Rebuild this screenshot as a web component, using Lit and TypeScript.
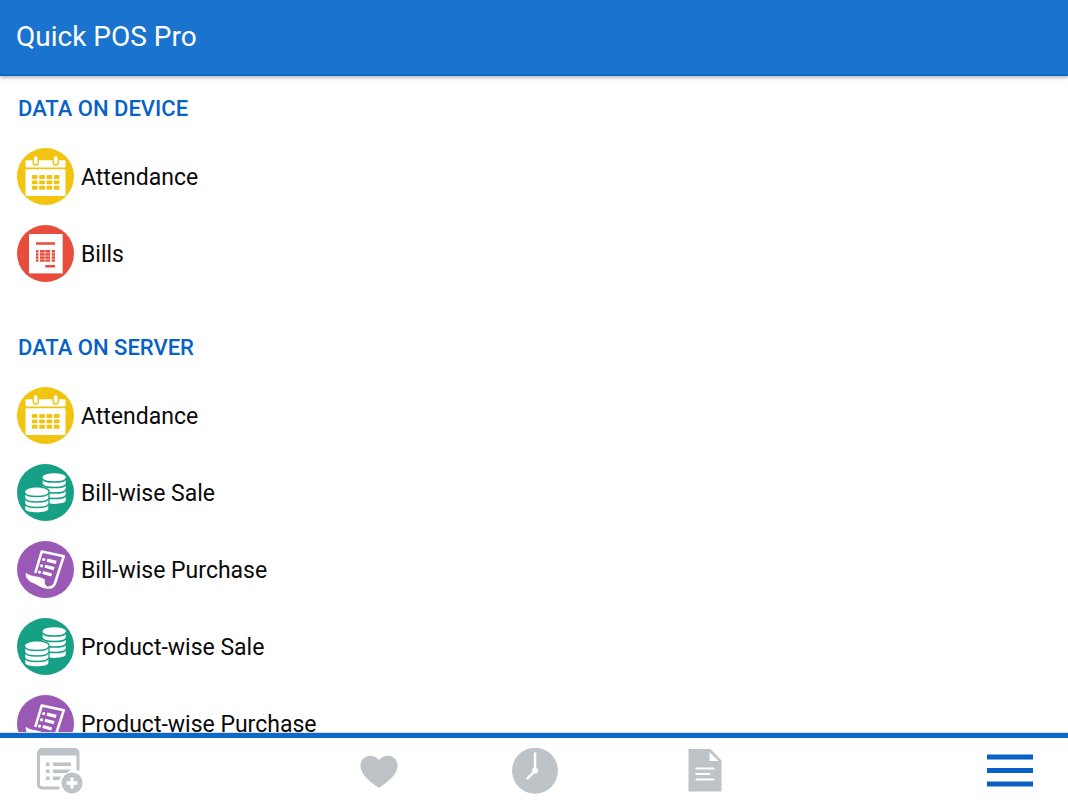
import { LitElement, html, css, svg } from "lit";
import { customElement, property } from "lit/decorators.js";

type IconName = "calendar" | "bill" | "coins" | "receipt";

const calendarCells = [27, 32.4, 37.8].map((y) =>
  [14.8, 22.2, 29.5, 36.8].map(
    (x) => svg`<rect x=${x} y=${y} width="5.7" height="3.9" rx="0.8" fill="#f1c40f"/>`
  )
);

const stack = (x: number, y: number, bottom: number, bands: number[]) => svg`
  <path fill="#fff" d="M${x} ${y}V${bottom}c0 4.4 23 4.4 23 0V${y}z"/>
  <ellipse cx=${x + 11.5} cy=${y} rx="11.5" ry="3.6" fill="#fff"/>
  ${bands.map((b) => svg`
    <path fill="none" stroke="#16a085" stroke-width="1.5"
      d="M${x - 0.4} ${b}c1 4.8 22.8 4.8 23.8 0"/>`)}`;

const art = {
  calendar: svg`
    <circle cx="28.5" cy="28.5" r="28.5" fill="#f1c40f"/>
    <rect x="8.5" y="12.2" width="40" height="7.2" rx="1" fill="#fff"/>
    <rect x="8.5" y="21.2" width="40" height="26.8" rx="1" fill="#fff"/>
    <rect x="16.2" y="7.6" width="5" height="9.4" rx="2.5" fill="#fff" stroke="#f1c40f" stroke-width="1.4"/>
    <rect x="36.2" y="7.6" width="5" height="9.4" rx="2.5" fill="#fff" stroke="#f1c40f" stroke-width="1.4"/>
    ${calendarCells}`,
  bill: svg`
    <circle cx="28.5" cy="28.5" r="28.5" fill="#e74c3c"/>
    <rect x="12" y="9" width="33.7" height="39.4" fill="#fff"/>
    <path fill="#e74c3c" d="M19 17.3h19v2.5H19zM28.3 40h9.7v2.5h-9.7z"/>
    <path fill="#e74c3c" d="M19 25h2.4v11.7H19zM23 25h10.2v11.7H23zM34.8 25H38v11.7h-3.2z"/>
    <path stroke="#fff" stroke-width="0.7" opacity="0.8" d="M18 27.8h21M18 31h21M18 34.2h21M28 24.5v12.5"/>`,
  coins: svg`
    <circle cx="28.5" cy="28.5" r="28.5" fill="#16a085"/>
    ${stack(25.7, 12.8, 36.6, [14.5, 20, 25.5, 31])}
    <path fill="#16a085" d="M7 27c0-6.5 25.6-6.5 25.6 0V46H7z"/>
    ${stack(8.3, 27.2, 45, [28.9, 34.4, 39.9])}`,
  receipt: svg`
    <circle cx="28.5" cy="28.5" r="28.5" fill="#9b59b6"/>
    <path fill="none" stroke="#fff" stroke-width="2.6" stroke-linejoin="round"
      d="M18.3 32 24.7 10.6 46.8 15.2 38.2 41.5C36.8 45.4 34.4 47 31.4 46"/>
    <path fill="#fff" stroke="#fff" stroke-linejoin="round"
      d="M9.2 32.4C14.5 36.6 20 34.6 27.6 38.8 26.4 42.6 28.4 46.2 33.2 46.8 27.5 48.2 22.5 45 17.6 42.2 12.5 40.2 9 38.2 9.2 32.4z"/>
    <g stroke="#fff" stroke-width="3.2" stroke-linecap="round">
      <path d="M26.7 18.5h.1M24.6 24.8h.1M22.5 31.1h.1"/>
      <path stroke-linecap="butt" d="m30 19.1 9.2 2.3M27.900 25.300l9.200 2.300M25.700 31.500l9 2.500"/>
    </g>`,
};

@customElement("report-row")
class ReportRow extends LitElement {
  @property() icon: IconName = "calendar";
  @property() label = "";

  static styles = css`
    :host { display: block; }
    .row {
      display: flex;
      align-items: center;
      gap: 7px;
      width: 100%;
      height: 77px;
      padding: 0 17px;
      border: 0;
      background: none;
      color: #0a0a0a;
      font: 23px/20px Roboto, sans-serif;
      text-align: left;
      cursor: pointer;
    }
    .icon { width: 57px; height: 57px; flex: none; }
    .label { padding-top: 2px; }
  `;

  render() {
    return html`<button class="row" type="button">
      <svg class="icon" viewBox="0 0 57 57" aria-hidden="true">${art[this.icon]}</svg>
      <span class="label">${this.label}</span>
    </button>`;
  }
}

const sections: { title: string; rows: [IconName, string][] }[] = [
  { title: "DATA ON DEVICE", rows: [["calendar", "Attendance"], ["bill", "Bills"]] },
  {
    title: "DATA ON SERVER",
    rows: [
      ["calendar", "Attendance"],
      ["coins", "Bill-wise Sale"],
      ["receipt", "Bill-wise Purchase"],
      ["coins", "Product-wise Sale"],
      ["receipt", "Product-wise Purchase"],
    ],
  },
];

const tabs = [
  {
    name: "New order",
    art: svg`
      <path fill="#bdc3c7" d="M5 0h32.500a5 5 0 0 1 5 5v17.500h-3V7.500H3V36a2.500 2.500 0 0 0 2.500 2.500H22.500V41.500H5a5 5 0 0 1-5-5V5a5 5 0 0 1 5-5z"/>
      <path fill="#bdc3c7" d="M9 14.500h3.500V18H9zM9 21.500h3.500V25H9zM9 28.500h3.500V32H9zM16 14.500h18V18H16zM16 21.500h18l-4 3.500H16zM16 28.500h8L22 32H16z"/>
      <circle cx="35" cy="35" r="10.5" fill="#bdc3c7"/>
      <path stroke="#fff" stroke-width="3.4" d="M35 29.500v11M29.500 35h11"/>`,
  },
  {
    name: "Favourites",
    art: svg`<path fill="#bdc3c7" d="M23 40C17 35.500 4.500 28 4.500 17.500 4.500 7 17.500 4.500 23 12 28.500 4.500 41.500 7 41.500 17.500 41.500 28 29 35.500 23 40z"/>`,
  },
  {
    name: "Recent",
    art: svg`
      <circle cx="23" cy="22.8" r="23" fill="#bdc3c7"/>
      <circle cx="23" cy="22.8" r="3" fill="#fff"/>
      <path fill="none" stroke="#fff" stroke-width="2.5" stroke-linecap="round" d="M23 5.500v17.300l-7.500 7.500"/>`,
  },
  {
    name: "Documents",
    art: svg`
      <path fill="#bdc3c7" d="M6.500 1H28.500L39.500 12.500V43.500H6.500z"/>
      <path fill="#fff" d="M27.500 4v9H36.500z"/>
      <path stroke="#fff" stroke-width="2.2" stroke-linecap="round" d="M14.500 20.500h17M14.500 26h13M14.500 31.500h17"/>`,
  },
  {
    name: "Menu",
    art: svg`<path stroke="#0862c6" stroke-width="5" d="M0 9h46M0 22.500h46M0 36h46"/>`,
  },
];

@customElement("app-root")
class AppRoot extends LitElement {
  static styles = css`
    :host {
      display: flex;
      flex-direction: column;
      height: 100vh;
      background: #fff;
      font-family: Roboto, sans-serif;
    }
    .bar {
      flex: none;
      display: flex;
      align-items: center;
      height: 74px;
      padding: 0 16px;
      background: #1a73ce;
      border-bottom: 2px solid #0869cb;
      box-shadow: 0 1px 4px rgba(0, 0, 0, 0.4);
      z-index: 1;
    }
    .title {
      margin: 0;
      color: #fff;
      font-size: 28px;
      line-height: 36px;
      font-weight: 400;
    }
    .list {
      flex: 1;
      min-height: 0;
      overflow-y: auto;
      scrollbar-width: none;
    }
    .section { padding: 21px 0 23px; }
    .heading {
      margin: 0 18px;
      padding-bottom: 17px;
      color: #0862c6;
      font-size: 22px;
      line-height: 24px;
      font-weight: 500;
    }
    .footer { flex: none; border-top: 1px solid #dcdcd6; }
    .tabs {
      display: grid;
      grid-template-columns: 301fr 156fr 156fr 184fr 271fr;
      justify-items: center;
      padding: 10px 0 6px;
      border-top: 5px solid #0b69cd;
    }
    .tab {
      width: 46px;
      height: 46px;
      padding: 0;
      border: 0;
      background: none;
      cursor: pointer;
    }
    .tab:first-child { justify-self: start; margin-left: 37px; }
    .tab:last-child { justify-self: end; margin-right: 35px; }
    .glyph { display: block; width: 46px; height: 46px; }
  `;

  render() {
    return html`
      <header class="bar"><h1 class="title">Quick POS Pro</h1></header>
      <main class="list">
        ${sections.map(
          (s) => html`<section class="section">
            <h2 class="heading">${s.title}</h2>
            ${s.rows.map(([icon, label]) => html`<report-row .icon=${icon} .label=${label}></report-row>`)}
          </section>`
        )}
      </main>
      <footer class="footer">
        <nav class="tabs">
          ${tabs.map(
            (t) => html`<button class="tab" type="button" aria-label=${t.name}>
              <svg class="glyph" viewBox="0 0 46 46" aria-hidden="true">${t.art}</svg>
            </button>`
          )}
        </nav>
      </footer>
    `;
  }
}
